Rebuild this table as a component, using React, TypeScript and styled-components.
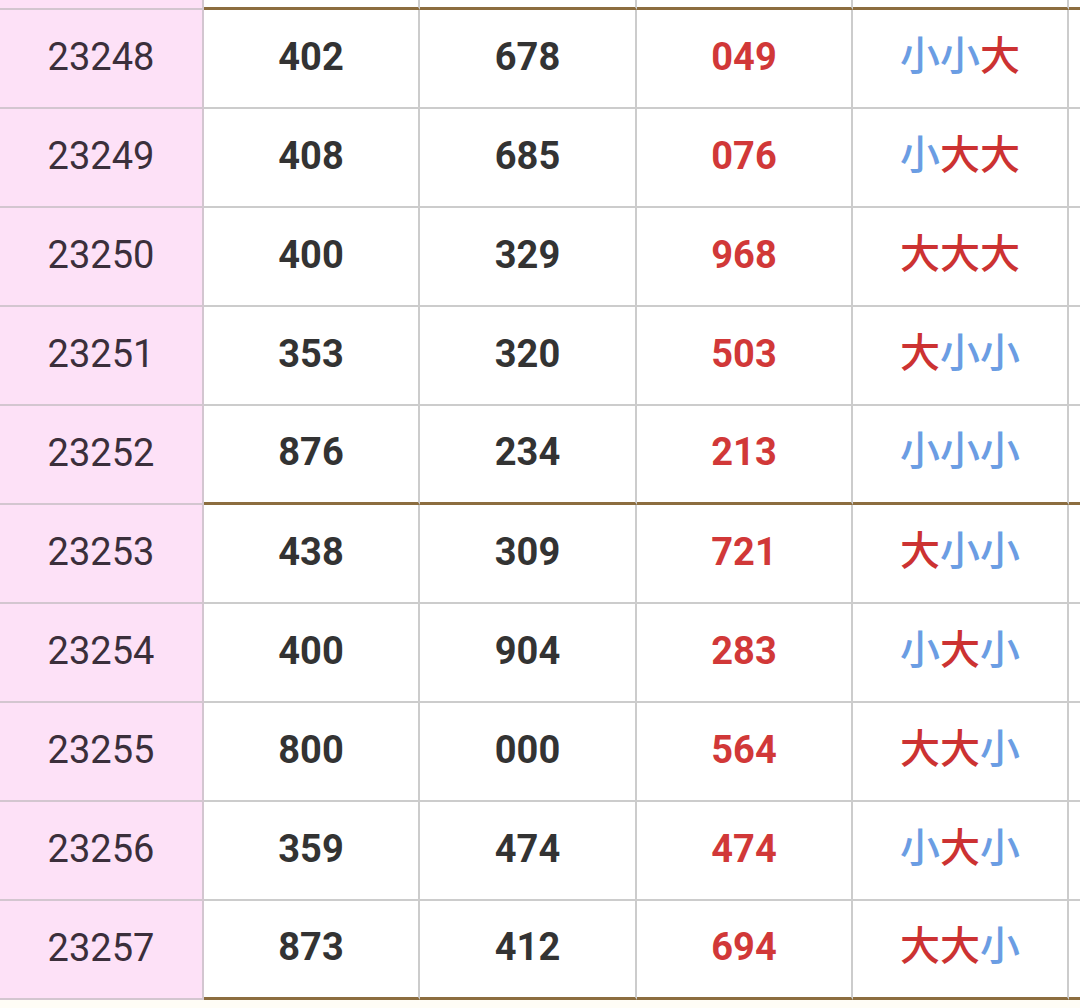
import styled, { createGlobalStyle } from 'styled-components';

const GlobalStyle = createGlobalStyle`
    html, body {
        margin: 0;
        padding: 0;
        background: #fffdf6;
    }
`;

interface Draw {
    issue: string;
    first: string;
    second: string;
    result: string;
}

const draws: Draw[] = [
    { issue: '23248', first: '402', second: '678', result: '049' },
    { issue: '23249', first: '408', second: '685', result: '076' },
    { issue: '23250', first: '400', second: '329', result: '968' },
    { issue: '23251', first: '353', second: '320', result: '503' },
    { issue: '23252', first: '876', second: '234', result: '213' },
    { issue: '23253', first: '438', second: '309', result: '721' },
    { issue: '23254', first: '400', second: '904', result: '283' },
    { issue: '23255', first: '800', second: '000', result: '564' },
    { issue: '23256', first: '359', second: '474', result: '474' },
    { issue: '23257', first: '873', second: '412', result: '694' },
];

const Table = styled.div`
    width: 1080px;
    overflow: hidden;
`;

const Row = styled.div<{ $height: number }>`
    display: grid;
    grid-template-columns: 204px 216px 217px 216px 216px 1fr;
    height: ${(p) => p.$height}px;
`;

const Cell = styled.div<{ $edge: boolean; $pink?: boolean; $last?: boolean }>`
    box-sizing: border-box;
    display: flex;
    align-items: center;
    justify-content: center;
    background: ${(p) => (p.$pink ? '#fde1f7' : '#ffffff')};
    border-right: ${(p) =>
        p.$last ? 'none' : `2px solid ${p.$pink ? '#d3c6d0' : '#cccccc'}`};
    border-bottom: ${(p) =>
        p.$pink
            ? '2px solid #d3c6d0'
            : p.$edge
              ? '3px solid #8c6d3f'
              : '2px solid #cccccc'};
    font-family: Roboto, 'Noto Sans CJK SC', sans-serif;
    font-size: 38px;
    line-height: 1;
    padding-bottom: 4px;
`;

const Issue = styled.span`
    color: #3b2f3b;
    font-weight: 400;
`;

const Number = styled.span<{ $red?: boolean }>`
    color: ${(p) => (p.$red ? '#d13838' : '#333333')};
    font-weight: 700;
`;

const Sizes = styled.span`
    font-family: 'Noto Sans CJK SC', sans-serif;
    font-size: 40px;
    font-weight: 500;
    margin-bottom: 8px;
`;

const Size = styled.span<{ $big: boolean }>`
    color: ${(p) => (p.$big ? '#cc3232' : '#6b9de3')};
`;

function DrawRow({ draw, edge }: { draw: Draw; edge: boolean }) {
    return (
        <Row $height={99}>
            <Cell $edge={edge} $pink>
                <Issue>{draw.issue}</Issue>
            </Cell>
            <Cell $edge={edge}>
                <Number>{draw.first}</Number>
            </Cell>
            <Cell $edge={edge}>
                <Number>{draw.second}</Number>
            </Cell>
            <Cell $edge={edge}>
                <Number $red>{draw.result}</Number>
            </Cell>
            <Cell $edge={edge}>
                <Sizes>
                    {draw.result.split('').map((d, i) => (
                        <Size key={i} $big={+d >= 5}>
                            {+d >= 5 ? '大' : '小'}
                        </Size>
                    ))}
                </Sizes>
            </Cell>
            <Cell $edge={edge} $last />
        </Row>
    );
}

export default function App() {
    return (
        <>
            <GlobalStyle />
            <Table>
                <Row $height={10}>
                    <Cell $edge $pink />
                    <Cell $edge />
                    <Cell $edge />
                    <Cell $edge />
                    <Cell $edge />
                    <Cell $edge $last />
                </Row>
                {draws.map((draw, i) => (
                    <DrawRow key={draw.issue} draw={draw} edge={i % 5 === 4} />
                ))}
            </Table>
        </>
    );
}
